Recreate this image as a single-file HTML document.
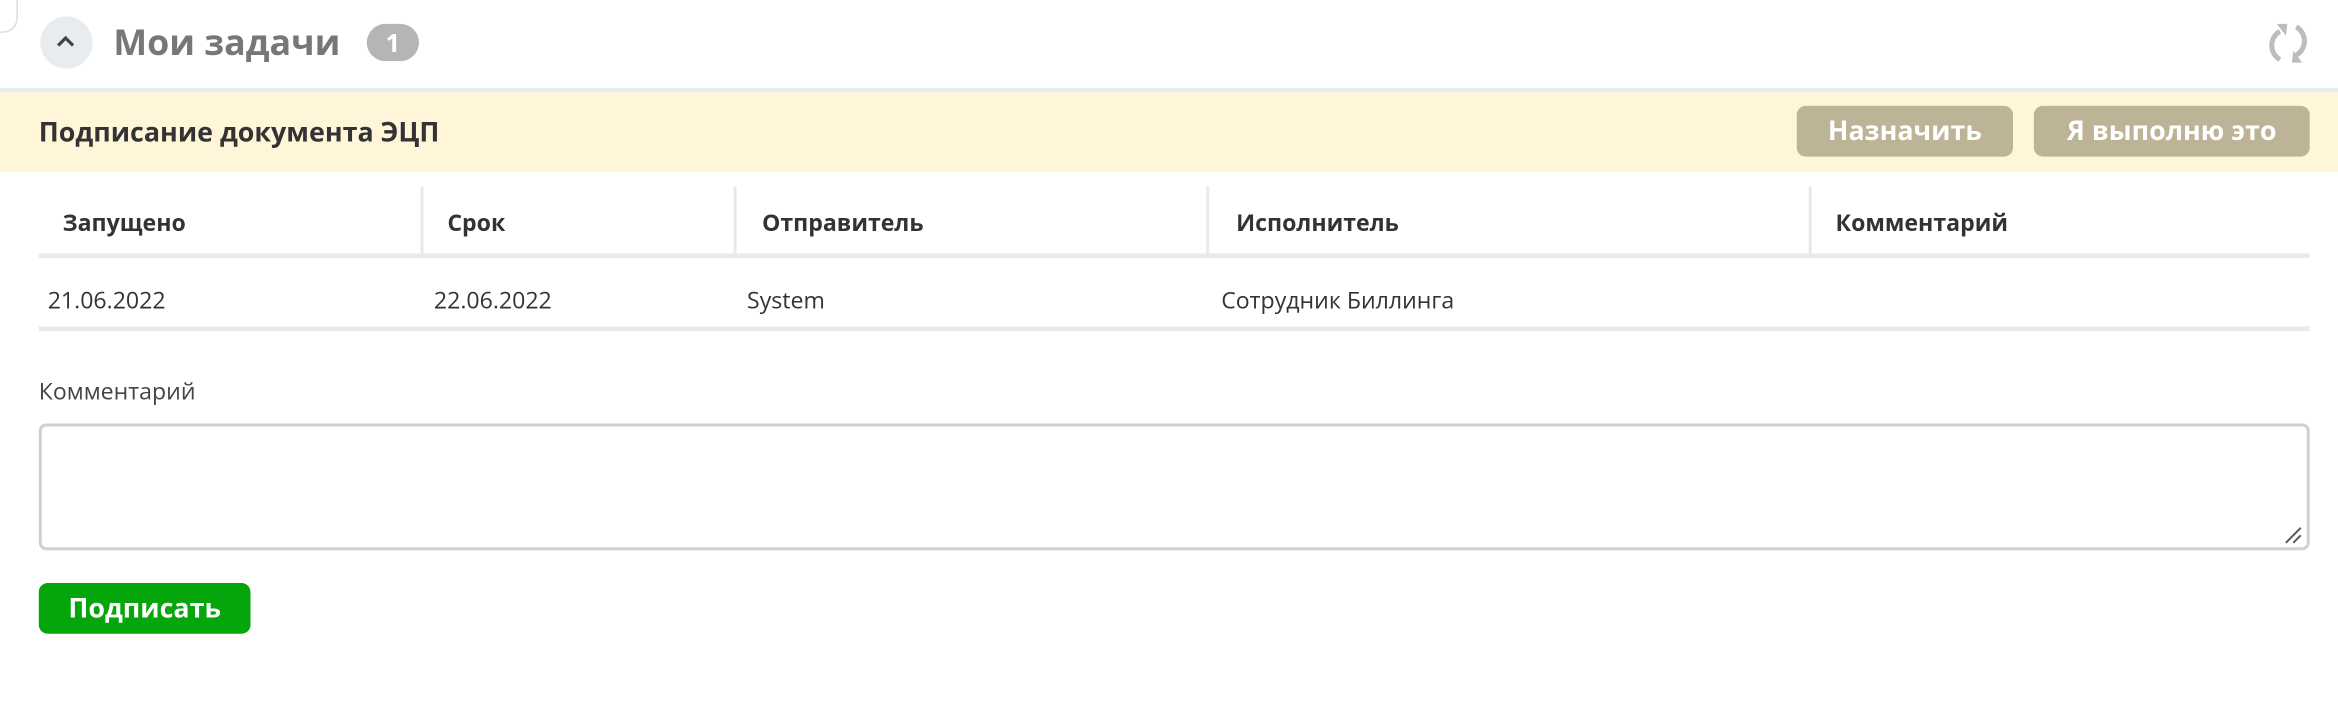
<!DOCTYPE html>
<html><head><meta charset="utf-8"><style>
html,body{margin:0;padding:0;background:#fff;overflow:hidden}
body{width:2338px;height:722px}
#w{position:absolute;left:0;top:0;width:1568px;height:484px;transform:scale(1.4911);transform-origin:0 0;font-family:"Open Sans","Liberation Sans",sans-serif;color:#333}
.a{position:absolute;white-space:nowrap}
.b{font-weight:bold}
.btn{position:absolute;border-radius:6px;color:#fff;font-weight:bold;font-size:18px;text-align:center}
.vs{position:absolute;top:125px;width:2px;height:45px;background:#e6eaed}
.th{position:absolute;top:138px;font-size:15.5px;font-weight:bold;color:#333}
.td{position:absolute;top:190px;font-size:15.5px;color:#333}
</style></head><body><div id="w">
<div class="a" style="left:-10px;top:-10px;width:20px;height:30px;border:1px solid #ddd;border-radius:10px"></div>
<div class="a" style="left:27px;top:11px;width:35px;height:35px;border-radius:50%;background:#e8ecef"></div>
<svg class="a" style="left:36px;top:21px" width="16" height="14" viewBox="0 0 16 14"><path d="M3 9.5 L8 4.5 L13 9.5" fill="none" stroke="#444" stroke-width="2.2"/></svg>
<div class="a b" style="left:76px;top:12px;font-size:24px;color:#777">Мои задачи</div>
<div class="a" style="left:246px;top:16px;width:35px;height:25px;border-radius:13px;background:#b5b5b5;color:#fff;font-weight:bold;font-size:17px;text-align:center;line-height:25px">1</div>
<svg class="a" style="left:1518px;top:12px" width="34" height="34" viewBox="0 0 34 34">
<path d="M11 9 A11 11 0 0 0 11 28" fill="none" stroke="#bdbdbd" stroke-width="3.4"/>
<path d="M9 4 L16 4 L15 12 Z" fill="#bdbdbd"/>
<path d="M22 6 A11 11 0 0 1 22 25" fill="none" stroke="#bdbdbd" stroke-width="3.4"/>
<path d="M26 30 L19 30 L20 22 Z" fill="#bdbdbd"/>
</svg>
<div class="a" style="left:0;top:59px;width:1568px;height:3px;background:#e8ecee"></div>
<div class="a" style="left:0;top:62px;width:1568px;height:53px;background:#fff5d9"></div>
<div class="a b" style="left:26px;top:77px;font-size:18px;color:#333">Подписание документа ЭЦП</div>
<div class="btn" style="left:1205px;top:71px;width:145px;height:34px;line-height:34px;background:#bdb396">Назначить</div>
<div class="btn" style="left:1364px;top:71px;width:185px;height:34px;line-height:34px;background:#bdb396">Я выполню это</div>
<div class="vs" style="left:282px"></div><div class="vs" style="left:492px"></div><div class="vs" style="left:809px"></div><div class="vs" style="left:1213px"></div>
<div class="th" style="left:42px">Запущено</div>
<div class="th" style="left:300px">Срок</div>
<div class="th" style="left:511px">Отправитель</div>
<div class="th" style="left:829px">Исполнитель</div>
<div class="th" style="left:1231px">Комментарий</div>
<div class="a" style="left:26px;top:170px;width:1523px;height:3px;background:#e6eaed"></div>
<div class="td" style="left:32px">21.06.2022</div>
<div class="td" style="left:291px">22.06.2022</div>
<div class="td" style="left:501px">System</div>
<div class="td" style="left:819px">Сотрудник Биллинга</div>
<div class="a" style="left:26px;top:219px;width:1523px;height:3px;background:#e6eaed"></div>
<div class="a" style="left:26px;top:251px;font-size:15.5px;color:#444">Комментарий</div>
<div class="a" style="left:26px;top:284px;width:1519px;height:81px;border:2px solid #d0d0d0;border-radius:5px"></div>
<svg class="a" style="left:1531px;top:352px" width="14" height="14" viewBox="0 0 14 14"><path d="M2 12 L12 2 M7 12 L12 7" stroke="#555" stroke-width="1.3"/></svg>
<div class="btn" style="left:26px;top:391px;width:142px;height:34px;line-height:34px;background:#05a50c">Подписать</div>
</div></body></html>
